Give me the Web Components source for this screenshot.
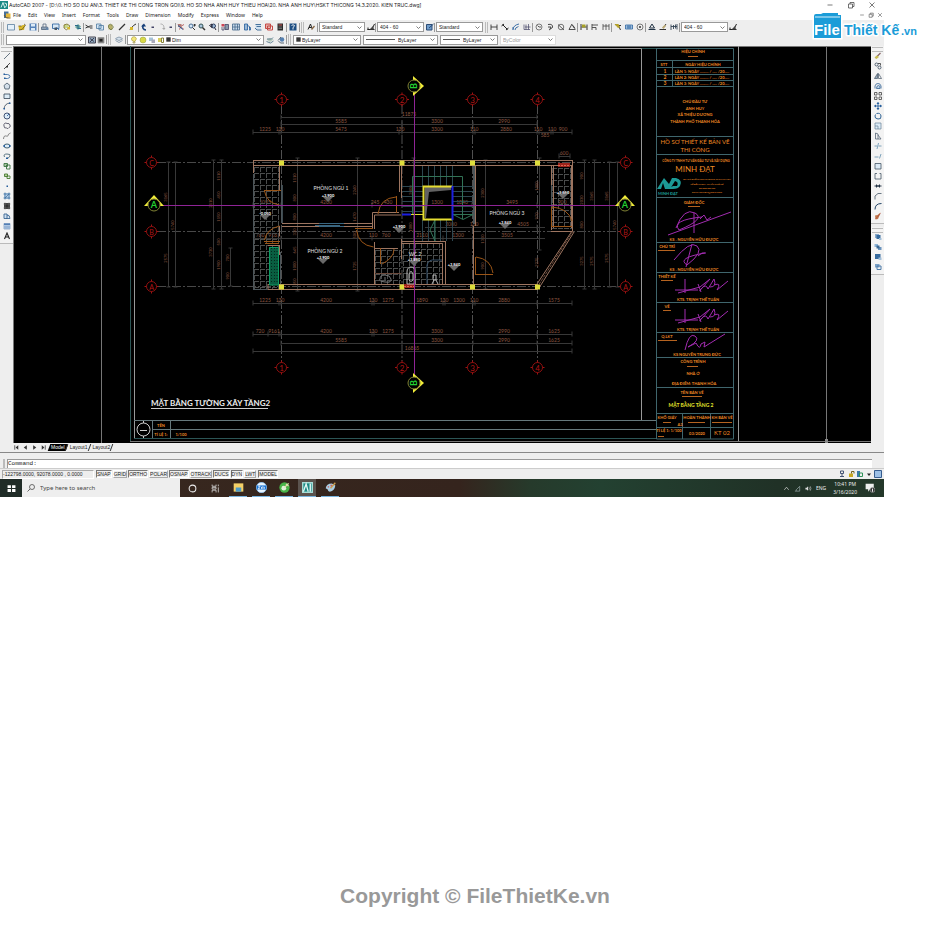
<!DOCTYPE html>
<html lang="en">
<head>
<meta charset="utf-8">
<title>AutoCAD 2007</title>
<style>
  body { margin: 0; background: #fff; font-family: "Noto Sans", "Open Sans", sans-serif; color: #222; }
</style>
</head>
<body>
<cad-page></cad-page>
<script>
const B = '#245d9c', K = '#333', Y = '#d9b92c';
const s = (d, c = K, w = 1.6) => `<path d="${d}" fill="none" stroke="${c}" stroke-width="${w}"/>`;
const f = (d, c = K) => `<path d="${d}" fill="${c}"/>`;
const ICONS = {
  new: f('M1 3h14v11H1z', '#e4f0fb') + s('M1 3h14v11H1z', '#5a7f9f'),
  open: f('M1 6h6l2-2h5l-2 10H2z', Y) + s('M1 6h6M12 2l3 2-7 9-6 1', '#665522'),
  save: f('M1 1h14v14H1z', '#5682b8') + f('M4 2h8v5H4zM4 10h8v5H4z', '#dceaf6'),
  print: f('M1 8h11v6H1z', '#8ea1b5') + s('M4 8V2h6v6M1 8h12v5H1z', '#596b80') + f('M10 9h5v5h-5z', '#6685a8'),
  preview: f('M1 2h12v9H1z', '#d9e8f5') + s('M1 2h13v9H1zM9 8l5 6', B) + f('M5 9h5v5H5z', '#456'),
  publish: f('M2 3h9v7H2z', '#c8d68a') + s('M2 4l6-2 6 4-7 8-5-4z', '#776a22') + f('M9 8h5v5H9z', Y),
  web: f('M8 2l6 5-6 7-6-6z', '#6fa89f') + s('M2 5h6v6h6', '#2b6a8a', 2.2),
  cut: s('M1 4l8 5M1 10l9-4M10 6h5M10 10h5', K, 2),
  copy: f('M1 2h9v9H1zM6 6h9v8H6z', '#d6e7f5') + s('M1 2h9v9H1zM6 5h9v9H6z', '#4d78a0'),
  paste: f('M3 3h8v10H3z', '#b7b06a') + s('M3 5l4-3 6 6-5 6-5-5z', '#66703c'),
  brush: s('M2 14L8 8l6-6', K, 2.6),
  match: s('M2 13l7-8 5-3', K, 2) + f('M2 8h6v6H2z', Y),
  undo: s('M12 14C6 14 4 9 7 4', '#153e78', 3) + f('M2 7l6-6 4 6z', '#153e78'),
  redo: s('M5 2c7 0 7 6 7 10', '#aaa', 2) + f('M8 10l4 4 3-4z', '#aaa'),
  dot: f('M5 7h5v3H5z', '#446'),
  pan: s('M2 3l5 5-2 5M7 7l7-4M8 8l6 5', '#a44') + f('M2 2h7v6H2z', '#b57a74') + s('M2 5l10 8', B, 2),
  zoomrt: `<circle cx="6" cy="6" r="4" fill="#d5e6f4" stroke="#4a6e96" stroke-width="2"/>` + s('M9 9l5 5M11 4h5M13 2v5', K, 2),
  zoomwin: `<circle cx="6" cy="6" r="4" fill="#aac3dc" stroke="#355" stroke-width="2"/>` + s('M9 9l5 5', '#333', 3),
  zoomprev: `<circle cx="9" cy="6" r="4" fill="#9db9d6" stroke="#346" stroke-width="2"/>` + s('M11 9l3 5M1 5l5-3v7z', '#223', 2),
  props: f('M1 2h6v5H1z', '#c45') + f('M8 3h7v10H8z', '#89a') + s('M2 8v6h4V8M8 3h7v10H8z', '#446'),
  dcenter: f('M1 2h14v12H1z', '#c7daeb') + s('M1 2h14v12H1zM6 2v12M11 2v12M1 8h14', '#45688c'),
  palettes: f('M3 2h6v12H3z', '#9bb9d6') + s('M3 2h6v12H3zM9 5l4 2v7M12 9h3v5h-3', B),
  sheet: f('M3 3h11v10H3z', '#cfe0ef') + s('M3 3h11M5 7h9M2 10l4 4h9', '#47739c', 2),
  markup: f('M1 2h10v9H1z', '#e7b1ab') + s('M1 2h10v9H1zM5 6h10v8H5z', '#c54a46', 2),
  calc: f('M3 1h11v14H3z', '#2b2b2b') + f('M5 3h7v2H5z', '#c55') + s('M5 8h7M5 11h7', '#999', 1.2),
  help: f('M1 1h14v14H1z', '#1e4e82') + s('M5 5q3-3 6 0q0 2-3 4v4', '#fff', 1.8),
  tstyle: s('M2 13L7 2l3 9M4 9h4', '#222', 2) + s('M9 13l6-7', '#864', 2.6),
  dstyle: s('M1 13h14M11 10l4-8M2 9v5', '#222', 2) + f('M5 13l7-7 2 7z', '#444'),
  tbstyle: f('M1 3h11v11H1z', '#6f9ccb') + s('M1 3h11v11H1zM6 10l9-8', '#2d4d77', 2),
  dlin: s('M2 3v11M14 3v11M2 8h12', '#333', 1.8), dali: s('M3 3l10 10M1 6l5-4M10 14l5-4', '#222', 2),
  darc: s('M2 13Q3 4 14 2M6 14q0-5 7-7M2 8v6', B, 1.7), dord: s('M2 3v10h12M6 3v10M11 2v11M4 8h11', '#446', 1.4),
  drad: `<circle cx="8" cy="8" r="6" fill="none" stroke="#555" stroke-width="1.5"/>` + s('M8 8l-3-3M8 8h4'),
  djog: s('M4 3q10-2 9 6L6 14M4 8h6l-2 4', '#333', 1.8), ddia: `<circle cx="8" cy="8" r="5.5" fill="none" stroke="#555" stroke-width="1.6"/>` + s('M2 3l12 11'),
  dang: s('M8 2L2 13h13M8 3l5 8M10 5l4 6', '#333', 1.7), qdim: s('M2 2v12M14 3v11M3 8h10', '#333', 2) + f('M4 3h7v6H4z', '#a6a026'),
  dbase: s('M2 2v12M2 4h12M2 9h8M10 9v5', '#444', 1.8), dcont: s('M2 2v12M8 2v12M14 2v12M2 6h12', '#444', 1.6),
  leader: s('M2 3l7 2 4 9M9 5h5', '#333', 2) + f('M1 2h8l3 7-4 1z', '#b6a22a'), tol: f('M1 4h14v8H1z', '#b9d2ea') + s('M1 4h14v8H1zM6 4v8M10 4v8M3 8h10', B, 1.5),
  center: `<circle cx="8" cy="8" r="6" fill="none" stroke="#555" stroke-width="1.5"/><circle cx="8" cy="8" r="2" fill="#333"/>`,
  dedit: s('M8 2L3 10h10zM1 13h14', '#234', 2), dtedit: s('M1 13h13M8 10l6-8', '#333', 2) + f('M6 9l6-6 2 3-5 6z', '#ba7'), dupd: s('M2 3v11M14 2v11M2 7h12M7 4v8M11 3v8', '#345', 1.8),
  lstate: f('M2 3h12v11H2z', '#93aabf') + s('M1 2h14v12H1zM4 5l8 6M12 4l-8 8', '#334', 1.8), lwork: f('M2 3h12v11H2z', '#777') + f('M5 6h6v5H5z', '#222') + s('M2 3h12v11H2z', '#999'),
  layers: f('M1 5l7-3 7 3-7 4z', '#d7e2ec') + s('M1 6l7 3 7-3M1 9l7 4 7-4M1 5l7-3 7 3', '#7a8ea2'), bulb: f('M5 10C-1 4 6 0 10 2c6 3 1 7 0 9z', '#f5e879') + s('M5 10C0 4 6 0 10 2c5 3 1 6 0 9zM6 12h4v2H6z', '#998f33', 1.2),
  sun: `<circle cx="8" cy="8" r="6" fill="#d9d947" stroke="#8f9b3d"/>`, vp: f('M2 3h8v7H2z', '#a6c4d8') + f('M7 7h7v7H7z', '#aab'), lock: f('M2 4h8v8H2z', '#d9cf5e') + s('M9 7V4h4v9H9z', '#87823a', 2),
  black: f('M1 1h14v14H1z', '#333'), lprev: f('M1 7l7-3 7 3-7 5z', '#b8cbbd') + s('M2 6h9l3-3M1 11l8 3 6-4', '#57788c', 1.8), lcur: `<circle cx="10" cy="7" r="4.500" fill="#547fb0"/>` + s('M2 9l5 5h7M3 8l5-6', '#345'),
  line: s('M2 14L14 2', '#456'), xline: s('M2 14L14 2', '#222') + f('M6 8h4v3H6z'), pline: s('M2 5h7q5 1 5 4t-5 4H3', B) + f('M1 3h3v3H1zM2 11h3v3H2z', B), polygon: f('M8 2l6 5-2 7H4L2 7z', '#d5e0ea') + s('M8 2l6 5-2 7H4L2 7z', '#456'),
  rect: f('M2 4h12v9H2z', '#dcebf6') + s('M2 4h12v9H2z', '#345'), arc: s('M2 14Q3 3 14 2', '#345') + f('M1 12h3v3H1zM12 1h3v3h-3z', B), circle: `<circle cx="8" cy="8" r="6" fill="#dcecf9" stroke="#346" stroke-width="1.8"/>` + s('M8 8l4-4', B),
  cloud: s('M3 3q3-2 5 0 5-1 6 3 2 4-2 5-2 4-5 1-5 1-5-4-1-3 1-5z', '#556', 1.8), spline: s('M1 14C2 2 9 12 10 7S14 4 15 2', '#666'), ellipse: `<ellipse cx="8" cy="8" rx="6" ry="4" fill="#dcecf9" stroke="#356" stroke-width="1.8"/>` + f('M1 6h3v4H1zM12 6h3v4h-3z', B),
  earc: s('M3 10Q0 4 8 4t6 4-6 5', '#356') + f('M6 11h4v3H6z', B), insert: f('M2 3h7v6H2z', '#a8c7a2') + s('M2 3h7v6H2zM7 6h7v8H7z', '#3a7340', 1.8), block: f('M3 4h7v6H3z', '#b7d29c') + s('M3 4h6v5H3zM8 8h6v5H8z', '#497c33', 1.8),
  point: f('M7 7h3v3H7z', B), hatch: f('M2 2h12v12H2z', '#b7d2ea') + s('M4 1v14M12 1v14M1 4h14M1 12h14M4 12l8-8', '#38689a', 1.4), gradient: f('M2 2h12v12H2z', '#333') + s('M4 1v14M12 1v14M1 4h14M1 12h14', '#777', 1.2),
  region: f('M2 4h9v9H2z', '#cfe0f0') + s('M2 4h6v9H2zM8 6q6 0 6 7H6', '#3d6893', 1.8), table: f('M2 3h12v11H2z', '#d0e3f5') + f('M2 3h12v3H2z', '#4d7bb2') + s('M2 3h12v11H2zM6 4v10M10 4v10M2 10h12', '#6489b8', 1.2), mtext: s('M3 14L8 2l5 12M5 10h6', '#222', 2.2),
  erase: s('M3 12L13 2', '#866', 2.5) + f('M1 11l5-4 4 3-5 4z', '#c8bd50'), copyobj: `<circle cx="5" cy="5" r="3" fill="none" stroke="#456" stroke-width="1.8"/><circle cx="11" cy="11" r="3" fill="none" stroke="#456" stroke-width="1.8"/>` + s('M8 3h5v4'),
  mirror: f('M7 3v10H1z', '#9ab') + s('M7 3v10H1zM9 3v10h6z', '#456', 1.4), offset: f('M5 13q0-6 4-6t4 6z', '#bcd3e8') + s('M2 13V8q1-5 6-5t6 5v5M5 13q0-6 4-6t3 6z', '#48739f', 1.8), array: s('M1 1h5v5H1zM10 1h5v5h-5zM1 10h5v5H1zM10 10h5v5h-5z', '#444', 1.6),
  move: s('M8 1v14M1 8h14', B, 1.8) + f('M5 4l3-4 3 4zM5 12l3 4 3-4zM4 5L0 8l4 3zM12 5l4 3-4 3z', B), rotate: s('M5 3q8-2 9 5t-6 6-6-6l1-3', '#316596', 2), scale: f('M2 2h12v12H2z', '#dcebf6') + s('M2 2h12v12H2zM2 8h6v6', '#68829a', 1.4),
  stretch: s('M3 14V2l5 2v10zM8 6l6 8H8', '#567', 1.6), trim: s('M1 8h5M9 8h6M9 2L6 14', '#58a', 1.5), extend: s('M1 10h8M14 4l-3 9', '#58a', 1.5), brkpt: f('M2 3h12v11H2z', '#dceaf5') + s('M2 3h12v11H2z', '#456'), brk: s('M6 3H2v11h12V3h-3', '#456'),
  join: s('M1 8h14', '#234', 2) + f('M4 4l4 4-4 4zM12 4L8 8l4 4z', '#234'), chamfer: s('M2 15V8l6-5h7', '#456'), fillet: s('M2 15Q2 3 15 3', '#246', 2), explode: f('M2 7l5-1 6-5-2 6-3 7-5 1z', '#c17a4e') + s('M3 14L13 3', '#a43', 1.4),
  front: f('M2 2h8v8H2z', '#88a9cb') + f('M5 4h8v8H5z', '#376b9e') + f('M10 10h5v4h-5z', '#a5c1da'), back: f('M1 2h7v6H1z', '#8db3d6') + f('M8 8h7v6H8z', '#6b94be') + f('M5 5h6v6H5z', '#3b6894'),
  above: f('M2 2h11v10H2z', '#376b9e') + f('M9 9h6v5H9z', '#a5c1da'), under: f('M2 2h9v7H2z', '#7ba1c7') + s('M6 6h8v7H6z', '#4d7ba8', 2),
  app: f('M0 0h16v16H0z', '#1b8a84') + s('M2 13L6 3l3 9M9 4q6 0 4 5t-5 4', '#d8f2f0', 2), doc: f('M2 1h9v13H2z', '#46709c') + f('M6 5h9v8H6z', '#e4b83d') + s('M2 8l5 6h8', '#7d6021', 2),
  comm: s('M5 2h6v5H5zM8 7v6M4 13h8', '#457', 2), unlock: f('M4 7h8v7H4z', '#c9a820') + s('M9 7V3h5v4', '#75621a', 2), tray: f('M2 2h6v12H2z', '#3b78a6') + s('M7 6h6v7H7z', '#2f9158', 2), max: f('M1 1h14v14H1z', '#9dc0e6') + s('M1 1h14v14H1z', '#365d8e', 2),
  drop: f('M4 7h8l-4 5z', '#222'),
  win: f('M1 2h6v5H1zM9 2h6v5H9zM1 9h6v5H1zM9 9h6v5H9z', '#fff'), mag: `<circle cx="10" cy="6" r="5" fill="none" stroke="#444" stroke-width="1.500"/>` + s('M6 10l-5 5', '#444'),
  cortana: `<circle cx="8" cy="8" r="6" fill="none" stroke="#eee" stroke-width="1.800"/>`, tview: s('M2 1v3h7V1M2 15v-4h7v4M2 6h7v3H2zM13 1v3M13 6v9', '#ddd', 1.4),
  folder: f('M1 2h14v12H1z', '#f4d067') + f('M4 8h8v6H4z', '#4b9bc9'), chrome: `<circle cx="8" cy="8" r="7.500" fill="#48b348"/><circle cx="7" cy="9" r="3.500" fill="#dff2d8"/>` + s('M8 8l6-6M10 3l4 3', '#e6d9b0'),
  zalo: `<circle cx="8" cy="8" r="7.500" fill="#e9f5ff" stroke="#8cc4f6"/>` + f('M1 5h14v6H1z', '#1470d4') + s('M3 6h3l-3 4h3M8 7v3M10 6v4M12 7v3', '#fff', 1.2),
  cad: f('M0 0h16v16H0z', '#a7dcd6') + f('M2 2h12v12H2z', '#1b8a84') + s('M2 14L6 3l3 11M12 2v12', '#e4f7f5', 2),
  paint: f('M1 9Q2 2 10 2l5 3q-1 8-8 9-3 0-3-3z', '#a9cce2') + s('M8 9l7-8', '#c99a4b', 2) + f('M4 6h2v2H4zM8 4h2v2H8z', '#c55'),
  up: s('M3 11l5-6 5 6', '#ddd'), net: s('M2 14h3M5 14v-3l8-8v11z', '#9aa'), vol: f('M1 6h3l3-3v10L4 10H1z', '#ddd') + s('M9 5q2 3 0 6M12 3q3 5 0 10', '#ddd', 1.3),
  note: f('M1 1h13v9H8l-3 4v-4H1z', '#eee') + `<circle cx="12" cy="11" r="4" fill="#333" stroke="#aaa"/>` + s('M12 9v5', '#eee'),
  min: s('M3 8h10', '#444', 1.4), restore: s('M3 6h8v8H3zM6 6V3h8v8h-3', '#444', 1.5), close: s('M3 3l10 10M13 3L3 13', '#444', 1.4),
  first: s('M4 3v10', '#222') + f('M12 3v10L6 8z'), prev: f('M11 3v10L4 8z'), next: f('M5 3v10l7-5z'), last: s('M12 3v10', '#222') + f('M4 3v10l6-5z')
};

const define = (name, css, html) => customElements.define(name, class extends HTMLElement {
  connectedCallback() {
    if (this.shadowRoot) return;
    this.attachShadow({ mode: 'open' }).innerHTML = `<style>*{box-sizing:border-box}button,input,select{font:inherit;color:inherit;background:none;border:0;margin:0;padding:0}${css}</style>` + (typeof html === 'function' ? html(this) : html);
  }
});
const icon = (n) => `<cad-icon name="${n}"></cad-icon>`;
const tool = (n) => `<tool-button name="${n}"></tool-button>`;
const group = (w, names) => `<tool-group style="--w:${w}px">${names.split(' ').map(tool).join('')}</tool-group>`;
const combo = (w, text, lead = '', extra = '') => `<tool-combo style="--w:${w}px" text="${text}" ${extra}>${lead}</tool-combo>`;

define('cad-icon', ':host{display:block;width:var(--icon,8px);height:var(--icon,8px);flex:none}svg{display:block;width:100%;height:100%}',
  e => `<svg viewBox="0 0 16 16" aria-hidden="true">${ICONS[e.getAttribute('name')]}</svg>`);
define('tool-button', ':host{display:block}button{display:flex;align-items:center;justify-content:center;width:100%;height:100%}',
  e => `<button type="button" aria-label="${e.getAttribute('name')}">${icon(e.getAttribute('name'))}</button>`);
define('tool-group', ':host{display:flex;flex:0 0 var(--w);justify-content:space-around;align-items:center;height:9px;border-right:1px solid #999}', '<slot></slot>');
define('tool-grip', ':host{display:block;flex:none;width:3px;height:11px;margin:0 1px;border:solid #bbb;border-width:0 1px}', '');
define('tool-combo', `:host{display:flex;flex:0 0 var(--w);height:10px;align-items:center;gap:1px;padding:0 2px;margin:0 1px;background:#fff;border:1px solid #999;position:relative;font:5px/8px "Liberation Sans",sans-serif}
  select{appearance:none;flex:1;min-width:0;height:8px;outline:0}:host([off]){color:#999;border-color:#ddd}svg{width:5px;height:5px;flex:none}`,
  e => `<slot></slot><select aria-label="${e.getAttribute('text') || 'Workspace'}" ${e.hasAttribute('off') ? 'disabled style="opacity:1"' : ''}><option>${e.getAttribute('text')}</option></select><svg viewBox="0 0 10 10"><path d="M1 3l4 4 4-4" fill="none" stroke="#555" stroke-width="1.500"/></svg>`);
define('line-sample', ':host{display:block;flex:0 0 var(--l);border-top:1px solid #555;margin-right:2px}', '');

define('title-bar', `:host{display:flex;align-items:center;height:10px;gap:1px;background:#fff;font:5px/8px Inter,sans-serif;white-space:nowrap}
  h1{font:inherit;margin:0;flex:1}nav{display:flex;gap:13px;padding-right:8px;--icon:8px}`,
  `${icon('app')}<h1>AutoCAD 2007 - [D:\\0. HO SO DU AN\\3. THIET KE THI CONG TRON GOI\\9. HO SO NHA ANH HUY THIEU HOA\\20. NHA ANH HUY\\HSKT THICONG 14.3.2020. KIEN TRUC.dwg]</h1><nav>${tool('min')}${tool('restore')}${tool('close')}</nav>`);
define('menu-bar', `:host{display:flex;align-items:center;height:10px;gap:2px;padding-left:3px;background:#fff;font-size:5px;line-height:8px}nav{display:flex;gap:7px;flex:1}.mdi{display:flex;gap:3px;padding-right:1px;--icon:6px}`,
  `${icon('doc')}<nav>${['File', 'Edit', 'View', 'Insert', 'Format', 'Tools', 'Draw', 'Dimension', 'Modify', 'Express', 'Window', 'Help'].map(t => `<button type="button">${t}</button>`).join('')}</nav><div class="mdi">${tool('min')}${tool('restore')}${tool('close')}</div>`);
define('tool-bars', `:host{display:block;background:#eee;padding-top:1px}.row{display:flex;align-items:center;height:12px}.row+.row{height:13px}`,
  `<div class="row"><tool-grip></tool-grip>${group(34, 'new open save')}${group(45, 'print preview publish web')}${group(55, 'cut copy paste brush match')}${group(37, 'undo dot redo dot')}${group(43, 'pan zoomrt zoomwin zoomprev')}${group(68, 'props dcenter palettes sheet markup calc')}${group(13, 'help')}
   <tool-grip></tool-grip>${group(13, 'tstyle')}${combo(46, 'Standard')}${group(10, 'dstyle')}${combo(47, '404 - 60')}${group(10, 'tbstyle')}${combo(47, 'Standard')}<tool-grip></tool-grip>
   ${group(44, 'dlin dali darc dord')}${group(45, 'drad djog ddia dang')}${group(34, 'qdim dbase dcont')}${group(34, 'leader tol center')}${group(34, 'dedit dtedit dupd')}${combo(47, '404 - 60')}${tool('dstyle')}</div>
   <div class="row"><tool-grip></tool-grip>${combo(80, '')}${group(20, 'lstate lwork')}<tool-grip></tool-grip>${group(14, 'layers')}${combo(137, 'Dim', ['bulb', 'sun', 'vp', 'lock'].map(icon).join('') + icon('black').replace('<cad-icon', '<cad-icon style="--icon:5px"'))}${group(22, 'lprev lcur')}<tool-grip></tool-grip>
   ${combo(68, 'ByLayer', icon('black').replace('<cad-icon', '<cad-icon style="--icon:5px"'))}${combo(75, 'ByLayer', '<line-sample style="--l:29px"></line-sample>')}${combo(58, 'ByLayer', '<line-sample style="--l:17px"></line-sample>')}${combo(56, 'ByColor', '', 'off')}</div>`);
define('side-palette', `:host{display:flex;flex-direction:column;background:#f3f3f3;border-bottom:1px solid #bbb;padding:5px 1px 2px;position:relative}:host::before{content:"";position:absolute;left:1px;right:1px;top:1px;height:3px;border:solid #bbb;border-width:1px 0}
  tool-button{height:10px}`, e => e.getAttribute('tools').split(' ').map(tool).join(''));

function planSvg() {
  const o = [];
  const L = (c, d, w = 1, x = '') => o.push(`<path d="${d}" fill="none" stroke="${c}" stroke-width="${w}" ${x}/>`);
  const F = (c, d) => o.push(`<path d="${d}" fill="${c}"/>`);
  const T = (x, y, t, z, c, a = 'middle', x2 = '') => o.push(`<text x="${x}" y="${y}" font-size="${z}" fill="${c}" text-anchor="${a}" ${x2}>${t}</text>`);
  const tan = '#9d7560', teal = '#2c5555', brown = '#8f5842', org = '#ee8a24', mag = '#8f2496', door = '#9a5517';
  /* sheet frames */
  L('#777', 'M101.500 46V443M826.500 46V443M130 441.500H871M13 46.500H871M13.500 46V443');
  L(teal, 'M130.500 46V441M134 438.500H656M641 48.500H656');
  L('#999', 'M134.500 438V48.500H641.500V420.500H134.500M738.500 46V441');
  L('#66787c', 'M134 420.500H656M152 429.500H656M152.500 420V438M170.500 420V438');
  L('#ccc', 'M150 429.500a6.500 6.500 0 1 1-13 0a6.500 6.500 0 1 1 13 0M140 430.500h7M143.500 421v2M143.500 436v2');
  F('#888', 'M825 439h3v4h-3z');
  T(161, 427, 'TÊN', 4, org, 'middle', 'font-weight="700"'); T(161, 436, 'TỈ LỆ 1:', 4, org, 'middle', 'font-weight="700"'); T(181, 436, '1/100', 4, org, 'middle', 'font-weight="700"');
  T(151, 406, 'MẶT BẰNG TƯỜNG XÂY TẦNG2', 8, '#eee', 'start', 'font-weight="700"');
  L('#ccc', 'M151 408.500H268');
  /* axes and bubbles */
  for (const [i, x] of [281.5, 402, 472.5, 537.5].entries()) {
    L('#505050', `M${x} 105V361`, 1, 'stroke-dasharray="9 2 2 2"');
    for (const y of [99.5, 367.5]) { o.push(`<circle cx="${x}" cy="${y}" r="5" fill="none" stroke="#8f1010"/>`); L('#a11212', `M${x - 7} ${y}h2M${x + 5} ${y}h2M${x} ${y - 7}v2M${x} ${y + 5}v2`); T(x, y + 3, i + 1, 8, '#b31414'); }
  }
  for (const [t, y] of [['C', 162.5], ['B', 231.5], ['A', 286.5]]) {
    L('#484848', `M157 ${y}H620`, 1, 'stroke-dasharray="9 2 2 2"');
    for (const x of [151.5, 625.5]) { o.push(`<circle cx="${x}" cy="${y}" r="5" fill="none" stroke="#8f1010"/>`); L('#a11212', `M${x - 7} ${y}h2M${x + 5} ${y}h2M${x} ${y - 7}v2M${x} ${y + 5}v2`); T(x, y + 3, t, 7, '#b31414'); }
  }
  /* dimension lines */
  const dims = (y, a, b, ticks, labels) => { L('#383838', `M${a} ${y}H${b}` + ticks.map(x => `M${x} ${y - 3}v5`).join('')); labels.forEach(([x, t]) => T(x, y - 2, t, 5, brown)); };
  dims(117.5, 281, 537, [281, 537], [[409, '11875']]);
  dims(124.5, 281, 537, [281, 402, 473, 537], [[341, 5585], [437, 3300], [504, 2990]]);
  dims(132.5, 253, 572, [253, 279, 281, 399, 402, 473, 475, 537, 539, 551, 553, 572], [[265, 1225], [280, 130], [341, 5475], [400, 130], [437, 3300], [474, 110], [506, 2880], [538, 110], [552, 110], [563, 900]]);
  T(545, 137, 585, 5, brown); dims(156.5, 559, 570, [559, 570], [[564, 600]]);
  dims(303.5, 253, 572, [253, 279, 281, 372, 374, 402, 443, 445, 473, 475, 537, 572], [[265, 1225], [280, 130], [326, 4200], [373, 130], [388, 1275], [422, 1890], [444, 130], [459, 1300], [474, 110], [504, 2880], [554, 1575]]);
  dims(334.5, 253, 572, [253, 268, 279, 281, 372, 374, 402, 473, 537, 572], [[260, 720], [274, 9161], [326, 4200], [373, 130], [388, 1275], [437, 3300], [504, 2990], [554, 1625]]);
  dims(343.5, 281, 572, [281, 402, 473, 537, 572], [[341, 5585], [437, 3300], [504, 2990], [554, 1625]]);
  dims(351.5, 253, 572, [253, 572], [[412, '16865']]);
  const vd = (x, a, b, ls) => { L('#383838', `M${x} ${a}V${b}M${x - 2} ${a}h4M${x - 2} ${b}h4`); ls.forEach(([y, t]) => T(x - 2, y, t, 4, brown, 'middle', `transform="rotate(-90 ${x - 2} ${y})"`)); };
  vd(175.5, 162, 287, [[225, 5740]]); vd(168.5, 162, 287, [[197, 3165], [258, 2575]]); vd(213.5, 160, 289, [[203, 2110], [252, 3730]]); vd(221.5, 160, 289, [[176, 1110], [195, 450], [217, 1150], [242, 500], [265, 1900]]);
  vd(230.5, 248, 286, [[258, 700], [276, 900]]);
  vd(297.5, 158, 291, [[178, 1110], [198, 800], [217, 800], [232, 330], [250, 645], [266, 1000], [282, 350]]); vd(357.5, 158, 291, [[190, 2240], [217, 1470], [235, 500], [266, 1725]]);
  vd(413.5, 158, 285, [[190, 3000], [227, 1080]]); vd(485.5, 160, 289, [[193, 2300], [239, 1300], [266, 900]]); vd(539.5, 158, 250, [[186, 1000], [216, 970], [262, 2275]]);
  vd(584.5, 160, 289, [[176, 900], [200, 2030], [225, 800], [261, 3275]]); vd(594.5, 160, 289, [[196, 3165], [261, 2575]]); vd(609.5, 162, 287, [[196, 3165], [258, 2575]]); vd(617.5, 162, 287, [[225, 5740]]);
  dims(205.500, 253, 572, [253, 281, 372, 402, 472, 537], [[265, 1095], [326, 4200], [375, 245], [388, 430], [437, 1300], [462, 1840], [512, 3495], [562, 900]]);
  dims(238.5, 253, 545, [281, 372, 402, 443, 473], [[260, 760], [274, 9161], [326, 4200], [373, 110], [386, 760], [422, 2110], [458, 1300], [507, 3505]]);
  dims(227.5, 425, 545, [473, 537], [[451, 2000], [474, 110], [523, 4505]]);
  /* tiled floors */
  const tile = (x, y, w, h, n = 5) => { let d = ''; for (let i = 0; i <= w; i += n) d += `M${x + i + .5} ${y}v${h}`; for (let j = 0; j <= h; j += n) d += `M${x} ${y + j + .5}h${w}`; L('#4a4c4c', d, 1, 'stroke-dasharray="5 1"'); };
  tile(254, 167, 25, 122, 6); tile(552, 168, 20, 60, 6); tile(403, 243, 40, 41, 6); tile(375, 250, 26, 34, 6);
  /* walls */
  L(tan, 'M253 160.500H573M253 165.500H572M268 284.500H538M268 289.500H538M253.500 160v13M279.500 166v24M279.500 226v10M282 223.500h91M282 226.500h91M372.500 226v-13.500H399M374.500 229v-14H401M399.500 166v26M401.500 166v32M374.500 242v42M372.500 226v2M374 248.500h24M402 241.500h43M402 243.500h40.500V284M445.500 241V284M475.500 166v60M473.500 226v59M551.500 166v64M553.500 166v62M572.500 160V231.500H551M571.500 166v62M268 284v5M268 245.500h12M279.500 245v10M572 231L537 284M574 232L539 288M401.500 239v20');
  L('#75503f', 'M573 231L538 286', 1, 'stroke-dasharray="3 1"');
  L('#4c5559', 'M253.500 174V289M253 289.500h15M281.500 185v38M280.500 252v32M473.500 166v58M474.500 166v58M551.500 185v25', 1);
  L('#3a6680', 'M319 223.500h25M315 225.500h25M319 226.500h25'); L('#3d4a50', 'M282.500 185V223'); F('#095e41', 'M269 247h9v38h-9z');
  L('#0d9a63', 'M269.500 247.500h9V285h-9z'); L('#03291d', 'M271.500 248v36M274.500 248v36M277 248v36', 1, 'stroke-dasharray="1 2"');
  for (const x of [281.5, 402, 472.5, 537.5]) for (const y of [162.5, 286.5]) F('#dede3c', `M${x - 2.5} ${y - 2}h5v5h-5z`);
  F('#9c241c', 'M404 284h11v4h-11zM558 163h12v4h-12z'); L('#de6650', 'M404 286.500h11M558 165.500h12', 1, 'stroke-dasharray="2 1"');
  /* doors */
  L(door, 'M264 190.500h17M264.500 191q2 12 15 14M264 241.500h16M264.500 240q2-11 15-14M265 243.500h14M396.500 196v17M378 214q2-16 18-17M355 228.500h18M356.500 230q2 15 17 17M380.500 248v16M394 249q0 9-12 15M475 274.500h18M493 273q-2-14-17-16M475.500 257v17M552 207q16 1 20 14M551.500 207v20M551 226.500h21');
  /* stairs */
  let d = ''; for (let y = 186.5; y < 216; y += 5) d += `M402 ${y}h21M453 ${y}h20`; for (let x = 422.5; x < 455; x += 6) d += `M${x} 166v20M${x} 220v21`; L('#2d4650', d);
  L('#317256', 'M412.500 214V176.500H462.500V219M453 214.500h20l-10 5-10-5M435 220l-5 10 5 11z');
  F('#626262', 'M425 187h26v3l-22 2-3 26h-1z'); L('#e5dd32', 'M452 186.500H423.500V219.500H452', 2); L('#1c1fe0', 'M452.500 186V220M402 214.500h9', 2); L('#e5dd32', 'M411 214.500h12');
  /* sanitary ware */
  L('#b9b9b9', 'M407 284v-12q0-5 4-5t4 5v12zM409 274q2-5 4 0v6q-2 3-4 0zM433 275h3v5h-3zM434 280l-2 4M436 280l2 4'); L('#34506b', 'M427 284V265q2-6 8-5h7'); L('#6b4a3c', 'M375.500 273.500h26'); L('#777', 'M380 279q0-4 5-4t6 4-6 3-5-3M385 277v3');
  /* sections */
  L(mag, 'M414.500 92V377M162 205.500H617');
  const sec = (x, y, r, t) => { o.push(`<g transform="rotate(${r} ${x} ${y})"><path d="M${x - 10} ${y + 1}L${x} ${y - 10}L${x + 10} ${y + 1}z" fill="#f1ec3a"/></g><circle cx="${x}" cy="${y}" r="6" fill="#000" stroke="#7f8134"/>`); T(x, y + 3, t, 9, '#23cf31', 'middle', 'font-weight="700"' + (t === 'B' ? ` transform="rotate(-90 ${x} ${y})"` : '')); };
  sec(154, 205, 0, 'A'); sec(625, 205, 0, 'A'); sec(414, 86, 90, 'B'); sec(414, 383, 90, 'B');
  /* rooms */
  for (const [x, y, t, lx, ly, l] of [[331, 190, 'PHÒNG NGỦ 1', 328, 197, '+3,900'], [325, 253, 'PHÒNG NGỦ 2', 323, 259, '+3,900'], [507, 215, 'PHÒNG NGỦ 3', 505, 224, '+3,840'], [415, 256, 'WC 2', 414, 261, '+3,880'], [0, 0, '', 265, 215, '-0,050'], [0, 0, '', 399, 228, '+3,900'], [0, 0, '', 454, 266, '+3,840'], [0, 0, '', 563, 194, '+3,850']]) {
    if (t) T(x, y, t, 5, '#e0e0e0'); F('#696969', `M${lx - 5} ${ly}h10l-5 5z`); T(lx, ly, l, 4, '#fff', 'middle', 'font-weight="700"');
  }
  /* title block */
  L('#3f666d', 'M656.500 48V439H733.500V48.500H656M656 60.500h77M656 67.500h77M656 74.500h77M656 80.500h77M656 86.500h77M672.500 60v26M656 136.500h77M656 154.500h77M656 197.500h77M656 242.500h77M656 272.500h77M656 302.500h77M656 332.500h77M656 357.500h77M656 387.500h77M656 413.500h77M656 427.500h77M682.500 413v26M710.500 413v26');
  const O = (x, y, t, z = 5, a = 'middle', c = org) => T(x, y, t, z, c, a, z < 6 ? 'font-weight="700"' : '');
  O(693, 53, 'HIỆU CHỈNH', 4); O(664, 66, 'STT', 4); O(703, 66, 'NGÀY HIỆU CHỈNH', 4);
  [73, 79, 85].forEach((y, i) => { O(665, y, i + 1, 5); O(702, y, `LẦN ${i + 1}: NGÀY ......... / ..... /20.....`, 4); });
  O(695, 103, 'CHỦ ĐẦU TƯ', 4); O(695, 110, 'ANH HUY', 4); O(695, 116, 'XÃ THIỆU DƯƠNG', 4); O(695, 123, 'THÀNH PHỐ THANH HÓA', 4);
  O(695, 144, 'HỒ SƠ THIẾT KẾ BẢN VẼ', 6); O(695, 152, 'THI CÔNG', 6); O(696, 162, 'CÔNG TY TNHH TƯ VẤN ĐẦU TƯ VÀ XÂY DỰNG', 3); O(695, 172, 'MINH ĐẠT', 8);
  O(707, 180, 'ĐỊA CHỈ: ĐƯỜNG QUANG TRUNG, TP THANH HÓA', 2); O(707, 185, 'SỐ ĐIỆN THOẠI - TƯ VẤN THIẾT KẾ', 2); O(707, 189, 'ĐT: 0915 301 236', 2); O(707, 193, 'EMAIL: MINHDAT@GMAIL.COM', 2);
  F('#1c9a96', 'M657 189l7-11 5 6 3-6h4q7 2 4 8-2 3-7 3h-5l5-3h4q2-4-2-5l-5 8h-5l-2-6-2 6z'); O(668, 195, 'MINH ĐẠT', 4, 'middle', '#1c9a96');
  O(694, 204, 'GIÁM ĐỐC', 4); O(694, 241, 'KS . NGUYỄN HỮU ĐƯỢC', 4); O(667, 248, 'CHỦ TRÌ', 4); O(694, 271, 'KS . NGUYỄN HỮU ĐƯỢC', 4);
  O(667, 278, 'THIẾT KẾ', 4); O(698, 301, 'KTS. TRỊNH THẾ TUÂN', 4); O(667, 308, 'VẼ', 4); O(698, 331, 'KTS. TRỊNH THẾ TUÂN', 4); O(667, 338, 'Q.LKT', 4); O(697, 356, 'KS NGUYỄN TRUNG ĐỨC', 4);
  O(693, 363, 'CÔNG TRÌNH', 4); O(693, 375, 'NHÀ Ở', 4); O(694, 385, 'ĐỊA ĐIỂM: THANH HÓA', 4); O(692, 394, 'TÊN BẢN VẼ', 4); O(691, 407, 'MẶT BẰNG TẦNG 2', 5, 'middle', '#e5e52c');
  O(667, 419, 'KHỔ GIẤY', 4); O(697, 419, 'HOÀN THÀNH', 4); O(722, 419, 'KH BẢN VẼ', 4); O(680, 426, 'A3', 4); O(669, 432, 'TỈ LỆ 1: 1/100', 4); O(697, 435, '03/2020', 4); O(722, 435, 'KT 02', 6);
  L('#b56320', 'M688 56.500h10M688 206.500h12M658 250.500h17M661 280.500h12M663 310.500h8M658 340.500h19M687 366.500h11M682 396.500h20M663 422.500h8M688 422.500h17M712 422.500h20M658 436.500h6');
  const sg = d => L('#a22cb0', d, 1);
  sg('M668 235L731 212M676 228Q684 207 695 213T679 230Q671 220 702 217M694 233V213M700 219l4-4 3 5 4-3');
  sg('M674 260Q690 240 697 246T687 265Q676 258 705 253M686 267l6-23M698 256l4-3 4 0');
  for (const y of [0, 30]) sg(`M675 ${y + 290}h23M685 ${y + 279}v14M678 ${y + 293}l22-6 10-8q-14 16-9 10t7 0l6-10q3 8-4 8M714 ${y + 285}q8-3 3 5l11-9M698 ${y + 284}l3 8`);
  sg('M685 350q4-18 10-14t-7 11l8-4q4 8 5 1l4-2-1 5L725 334');
  return `<svg viewBox="13 46 858 397" role="img" aria-label="Second floor wall plan">${o.join('')}</svg>`;
}
define('plan-drawing', ':host{display:block;background:#000}svg{display:block;width:100%;font-family:Lato,sans-serif}', planSvg);

define('layout-tabs', `:host{display:flex;align-items:center;height:9px;padding-left:13px;font:5px/7px "Liberation Sans",sans-serif}nav{display:flex;gap:1px;--icon:7px}.nav{gap:2px;padding-right:2px}nav>button{height:7px;padding:0 2px;position:relative;z-index:0}nav>button::before{content:"";position:absolute;inset:0;z-index:-1;border-right:1px solid #333;transform:skewX(-20deg)}.on{color:#fff}button.on::before{background:#000}`,
  `<nav class="nav">${tool('first')}${tool('prev')}${tool('next')}${tool('last')}</nav><nav><button class="on">Model</button><button>Layout1</button><button>Layout2</button></nav>`);
define('command-line', `:host{display:flex;align-items:stretch;height:17px;padding:6px 12px 0 3px;border-top:1px solid #888;border-bottom:1px solid #ccc;gap:2px;font:6px/8px "Liberation Mono",monospace}label{flex:1;display:flex;background:#fff;border:solid #999;border-width:1px 0 0 1px}input{flex:1;outline:0}i{width:2px;border:solid #bbb;border-width:0 1px}`,
  '<i></i><label>Command:<input aria-label="Command"></label>');
define('status-bar', `:host{display:flex;align-items:center;height:10px;padding:0 2px;gap:1px;font:5px/8px "Liberation Sans",sans-serif}output{width:92px;border:1px solid #ccc;border-color:#aaa #fff #fff #aaa;line-height:7px;margin-right:1px}
  button{height:8px;padding:0;line-height:6px;border:1px solid;border-color:#fff #aaa #aaa #fff}button:last-of-type{margin-left:1px}.on{border-color:#777 #fff #fff #777}nav{margin-left:auto;display:flex;gap:1px}`,
  `<output>-122798.0000, 92078.0000 , 0.0000</output>${['SNAP*', 'GRID', 'ORTHO*', 'POLAR', 'OSNAP*', 'OTRACK', 'DUCS*', 'DYN*', 'LWT', 'MODEL*'].map(t => `<button type="button" class="${t.includes('*') ? 'on' : ''}">${t.replace('*', '')}</button>`).join('')}<nav>${['comm', 'unlock', 'tray', 'drop', 'max'].map(tool).join('')}</nav>`);
define('task-bar', `:host{display:flex;height:18px;align-items:stretch;color:#eee;background:linear-gradient(90deg,#38291f,#35241d 52%,#263a2b 60%,#234131 68%,#203126 88%,#24382a);font-size:5px;line-height:8px}
  .start{width:22px;background:#202c27;--icon:9px}label{display:flex;align-items:center;gap:5px;width:158px;padding-left:5px;background:#eee;color:#444;font-size:6px}input{flex:1;min-width:0;outline:0}input::placeholder{color:#444;opacity:1}
  .apps{display:flex;--icon:11px}.apps tool-button{width:18px;margin:0 2px 0 3px}.apps tool-button:nth-child(n+3){border-bottom:1px solid #79b4df}.apps .cur{background:#5b534e}
  .tray{margin-left:auto;display:flex;align-items:center;gap:4px;padding-right:9px;--icon:7px}time{text-align:center;display:block;padding-left:3px}.note{--icon:10px;padding-left:4px}.apps tool-button:nth-child(-n+2){--icon:9px}`,
  `<tool-button class="start" name="win"></tool-button><label>${icon('mag')}<input placeholder="Type here to search" aria-label="Search"></label><div class="apps">${['cortana', 'tview', 'folder', 'zalo', 'chrome'].map(tool).join('')}<tool-button class="cur" name="cad"></tool-button>${tool('paint')}</div>
  <div class="tray">${tool('up')}${tool('net')}${tool('vol')}<span>ENG</span><time>10:41 PM<br>3/16/2020</time><tool-button class="note" name="note"></tool-button></div>`);
define('site-logo', ':host{display:block}svg{display:block;width:106px;height:32px;overflow:visible}',
  `<svg viewBox="0 0 106 32" role="img" aria-label="File Thiết Kế.vn"><g font-family="'Liberation Sans',sans-serif" font-weight="700"><path d="M2 28V6q0-2 2-2h5l2-1h15v2h3v23z" fill="#1b9cd8" stroke="#fff" stroke-width="3" paint-order="stroke"/><path d="M3 7h25" stroke="#d9f0fc"/><text x="2" y="25" font-size="15" fill="#fff">File</text>
  <g fill="#1b9cd8" stroke="#fff" stroke-width="3" stroke-linejoin="round" paint-order="stroke"><text x="32" y="25" font-size="14">Thiết Kế</text><text x="89" y="25" font-size="11">.vn</text></g></g></svg>`);
define('copy-mark', ':host{display:block;text-align:center;font:700 21px/24px "Liberation Sans",sans-serif;color:#999}p{margin:0}', '<p>Copyright © FileThietKe.vn</p>');
define('cad-page', `:host{display:block;position:relative}main{margin-right:66px;background:#eee;overflow:hidden}.work{display:grid;grid-template-columns:13px minmax(0,1fr) 13px;align-items:start}.right{display:grid;gap:3px}
  site-logo{position:absolute;top:10px;right:32px}copy-mark{margin-top:387px}`,
  `<main><title-bar></title-bar><menu-bar></menu-bar><tool-bars></tool-bars>
  <div class="work"><side-palette tools="line xline pline polygon rect arc circle cloud spline ellipse earc insert block point hatch gradient region table mtext"></side-palette><plan-drawing></plan-drawing>
  <div class="right"><side-palette tools="erase copyobj mirror offset array move rotate scale stretch trim extend brkpt brk join chamfer fillet explode"></side-palette><side-palette tools="front back above under"></side-palette></div></div>
  <layout-tabs></layout-tabs><command-line></command-line><status-bar></status-bar><task-bar></task-bar></main><site-logo></site-logo><copy-mark></copy-mark>`);
</script>
</body>
</html>
